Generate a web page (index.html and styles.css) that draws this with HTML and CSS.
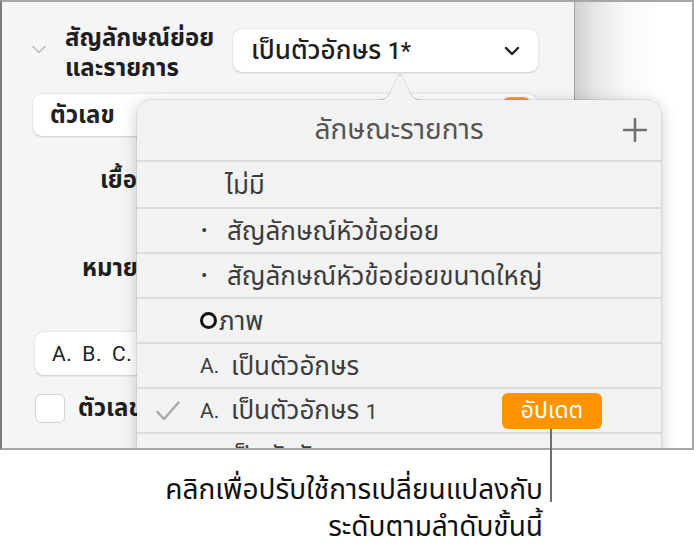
FILE: index.html
```html
<!DOCTYPE html>
<html lang="th">
<head>
<meta charset="utf-8">
<title>ลักษณะรายการ</title>
<link rel="stylesheet" href="styles.css">
</head>
<body>
<div class="frame">
  <div class="panel">
    <div class="section-head">
      <svg class="disclosure" width="14" height="9" viewBox="0 0 14 9"><path d="M1 1.5 L7 7.5 L13 1.5" fill="none" stroke="#bdbdbd" stroke-width="1.6" stroke-linecap="round" stroke-linejoin="round"/></svg>
      <div class="section-title">สัญลักษณ์ย่อย<br>และรายการ</div>
      <div class="dropdown">
        <span>เป็นตัวอักษร <span class="lat">1*</span></span>
        <svg width="16" height="10" viewBox="0 0 16 10"><path d="M2 2 L8 8 L14 2" fill="none" stroke="#222" stroke-width="2.4" stroke-linecap="round" stroke-linejoin="round"/></svg>
      </div>
    </div>
    <div class="field field-type">
      <span class="bold">ตัวเลข</span>
      <span class="swatch"></span>
    </div>
    <div class="label label-indent bold">เยื้อง</div>
    <div class="label label-num bold">หมายเลข</div>
    <div class="field field-abc">A. B. C.</div>
    <div class="check-row">
      <span class="checkbox"></span>
      <span class="bold">ตัวเลขแบบลำดับขั้น</span>
    </div>
  </div>
  <div class="canvas"></div>

  <div class="popover">
    <svg class="arrow" width="50" height="28" viewBox="0 0 50 28"><path d="M0 28 C 9 28 12 25 15 20 L 23 3 Q 25 0 27 3 L 35 20 C 38 25 41 28 50 28 Z" fill="#f2f2f2"/></svg>
    <div class="pop-head">
      <span class="pop-title">ลักษณะรายการ</span>
      <svg class="plus" width="24" height="24" viewBox="0 0 24 24"><path d="M12 1 V23 M1 12 H23" stroke="#707070" stroke-width="2.6" stroke-linecap="round"/></svg>
    </div>
    <div class="row row-first"><span class="mark"></span><span class="indent">ไม่มี</span></div>
    <div class="row"><span class="mark"></span><span class="bullet">•</span><span>สัญลักษณ์หัวข้อย่อย</span></div>
    <div class="row"><span class="mark"></span><span class="bullet">•</span><span>สัญลักษณ์หัวข้อย่อยขนาดใหญ่</span></div>
    <div class="row"><span class="mark"></span><span class="ring"></span><span>ภาพ</span></div>
    <div class="row"><span class="mark"></span><span class="lat tab">A.</span><span>เป็นตัวอักษร</span></div>
    <div class="row row-current">
      <span class="mark"><svg width="24" height="20" viewBox="0 0 24 20"><path d="M1.5 11 L8 18 L22.5 1.5" fill="none" stroke="#a9a9a9" stroke-width="2.4" stroke-linecap="round" stroke-linejoin="round"/></svg></span>
      <span class="lat tab">A.</span><span>เป็นตัวอักษร <span class="lat">1</span></span>
      <span class="update">อัปเดต</span>
    </div>
    <div class="row"><span class="mark"></span><span class="bullet">•</span><span>เป็นตัวอักษร</span></div>
  </div>
</div>
<div class="callout">
  <span class="leader"></span>
  <p class="callout-text">คลิกเพื่อปรับใช้การเปลี่ยนแปลงกับ<br>ระดับตามลำดับขั้นนี้</p>
</div>
</body>
</html>
```
FILE: styles.css
```css
* { box-sizing: border-box; }
html, body { margin: 0; padding: 0; background: #fff; }
body {
  width: 694px;
  font-family: Roboto, "Noto Sans Thai", "Noto Sans", sans-serif;
  color: #222;
}
.lat { font-size: 21px; }
.frame {
  position: relative;
  width: 694px;
  height: 450px;
  border: 2px solid #a6a6a6;
  border-left-color: #7c7c7c;
  display: flex;
  overflow: hidden;
}
.panel {
  width: 572px;
  background: #f5f5f5;
  flex: none;
}
.canvas {
  flex: 1;
  border-left: 1px solid #a3a3a3;
  background: linear-gradient(90deg, #cfcfcf 0, #e6e6e6 20px, #f8f8f8 50px, #fff 80px);
}
.bold { font-weight: 700; }

.section-head {
  display: flex;
  align-items: flex-start;
  padding-top: 21px;
}
.disclosure { margin: 22px 0 0 30px; flex: none; }
.section-title {
  margin-left: 19px;
  font-size: 24px;
  font-weight: 700;
  line-height: 30px;
  width: 168px;
  color: #1e1e1e;
}
.dropdown {
  margin-top: 6px;
  width: 305px;
  height: 43px;
  background: #fff;
  border-radius: 9px;
  box-shadow: 0 0.5px 2px rgba(0,0,0,0.18);
  display: flex;
  align-items: center;
  justify-content: space-between;
  padding: 0 18px 0 18px;
  font-size: 26px;
  font-weight: 500;
  color: #1e1e1e;
}
.dropdown .lat { font-size: 23px; font-weight: 500; }
.field {
  background: #fff;
  border-radius: 9px;
  box-shadow: 0 0.5px 2px rgba(0,0,0,0.18);
  display: flex;
  align-items: center;
  font-size: 24px;
}
.field-type {
  margin: 11px 0 0 31px;
  width: 504px;
  height: 42px;
  padding: 0 7px 0 17px;
  justify-content: space-between;
  align-items: flex-start;
}
.field-type .bold { line-height: 42px; }
.swatch {
  margin-top: 3px;
  width: 27px;
  height: 30px;
  border-radius: 6px;
  background: #f5a623;
}
.label {
  font-size: 24px;
  line-height: 30px;
  color: #1e1e1e;
}
.label-indent { margin: 29px 0 0 98px; }
.label-num { margin: 58px 0 0 80px; }
.field-abc {
  margin: 49px 0 0 33px;
  width: 504px;
  height: 43px;
  padding-left: 17px;
  color: #1e1e1e;
  font-size: 21px;
  word-spacing: 4px;
  letter-spacing: 0.6px;
}
.check-row {
  display: flex;
  align-items: center;
  gap: 13px;
  margin: 18px 0 0 33px;
  font-size: 24px;
  line-height: 30px;
  color: #1e1e1e;
}
.checkbox {
  width: 30px;
  height: 29px;
  background: #fff;
  border: 1px solid #d2d2d2;
  border-radius: 6px;
}

/* popover */
.popover {
  position: absolute;
  left: 135px;
  top: 98px;
  width: 524px;
  height: 420px;
  background: #f2f2f2;
  border-radius: 14px 14px 0 0;
  box-shadow: 0 3px 16px rgba(0,0,0,0.22), 0 0 0 0.5px rgba(0,0,0,0.12);
  color: #3c3c3c;
}
.arrow {
  position: absolute;
  left: 238px;
  top: -27px;
  filter: drop-shadow(0 -0.5px 0.6px rgba(0,0,0,0.2));
}
.pop-head {
  position: relative;
  height: 62px;
  border-bottom: 2px solid #dcdcdc;
  display: flex;
  align-items: center;
  justify-content: center;
}
.pop-title {
  font-size: 28px;
  line-height: 40px;
  color: #555;
}
.plus {
  position: absolute;
  right: 14px;
  top: 18px;
}
.row {
  height: 45px;
  border-bottom: 2px solid #dcdcdc;
  display: flex;
  align-items: center;
  font-size: 26px;
  line-height: 36px;
  color: #3c3c3c;
}
.row-first { height: 47px; }
.mark {
  width: 63px;
  padding-left: 19px;
  flex: none;
  display: flex;
  align-items: center;
}
.indent { padding-left: 25px; }
.bullet {
  width: 27px;
  padding-left: 1px;
  font-size: 19px;
}
.tab { width: 31px; flex: none; }
.ring {
  width: 17px;
  height: 17px;
  border: 3px solid #111;
  border-radius: 50%;
  margin-right: 2px;
}
.row-current { position: relative; }
.update {
  position: absolute;
  left: 365px;
  top: 4px;
  width: 100px;
  height: 36px;
  border-radius: 6px;
  background: #ff9300;
  color: #fff;
  font-size: 23px;
  display: flex;
  align-items: center;
  justify-content: center;
}

/* callout */
.callout {
  position: relative;
  height: 101px;
}
.leader {
  position: absolute;
  left: 550px;
  top: -21px;
  width: 2px;
  height: 73px;
  background: #6e6e6e;
}
.callout-text {
  margin: 0;
  width: 543px;
  padding-top: 21px;
  text-align: right;
  font-size: 28px;
  line-height: 37px;
  color: #111;
}
```
